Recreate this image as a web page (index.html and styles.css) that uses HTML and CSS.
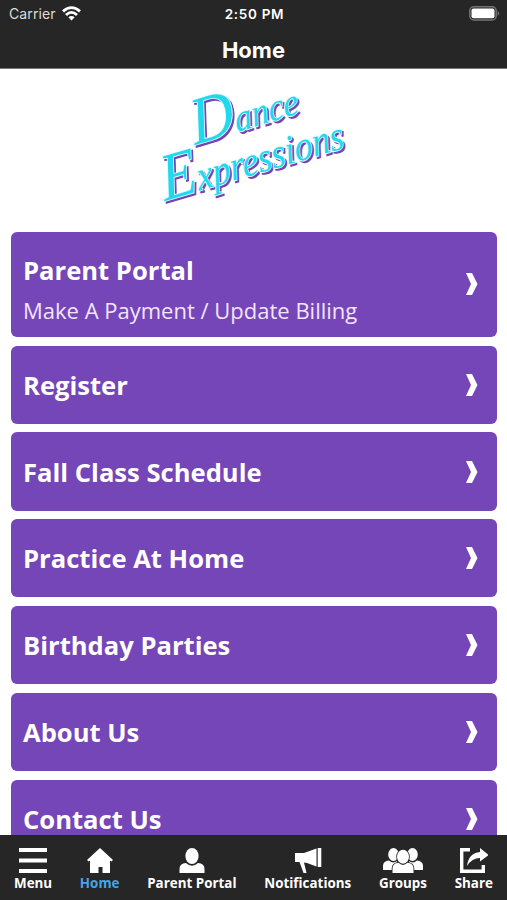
FILE: index.html
```html
<!DOCTYPE html>
<html lang="en">
<head>
<meta charset="utf-8">
<title>Home</title>
<link rel="stylesheet" href="styles.css">
</head>
<body>
<div class="app">
  <header class="header">
    <div class="status">
      <div class="carrier"><span>Carrier</span>
        <svg width="19" height="15" viewBox="0 0 19 15" fill="none" stroke="#fff" stroke-width="2.8"><path d="M1 5.4Q9.5-2.2 18 5.4M4 9Q9.5 3.8 15 9"/><path d="M6.3 11.3Q9.5 8.5 12.7 11.3L9.5 14.4Z" fill="#fff" stroke="none"/></svg>
      </div>
      <div class="clock">2:50 PM</div>
      <svg class="battery" width="31" height="15" viewBox="0 0 31 15"><rect x=".8" y=".8" width="26.4" height="13.2" rx="4" fill="#262626" stroke="#747474" stroke-width="1.5"/><rect x="2.5" y="2.5" width="23" height="9.8" rx="2" fill="#fff"/><path d="M28.6 5Q32 7.4 28.6 9.8Z" fill="#747474"/></svg>
    </div>
    <h1 class="title">Home</h1>
  </header>
  <main class="content">
    <div class="brand">
      <svg width="210" height="135" viewBox="0 0 210 135">
        <defs>
          <g id="wordmark">
            <text transform="translate(45 65) rotate(-17) skewX(-6)" textLength="110" lengthAdjust="spacingAndGlyphs"><tspan font-size="66">D</tspan><tspan font-size="38">ance</tspan></text>
            <text transform="translate(15 121) rotate(-16.5) skewX(-6)" textLength="188" lengthAdjust="spacingAndGlyphs"><tspan font-size="66">E</tspan><tspan font-size="41">xpressions</tspan></text>
          </g>
        </defs>
        <use href="#wordmark" class="logo-shadow" x="2" y="2"/>
        <use href="#wordmark" class="logo-edge"/>
        <use href="#wordmark" class="logo-face"/>
      </svg>
    </div>
    <nav class="list">
      <a class="card tall"><span class="copy"><b>Parent Portal</b><small>Make A Payment / Update Billing</small></span><svg class="chev" viewBox="0 0 12 22"><path d="M0 0H6L11.5 11L6 22H0L5 11Z"/></svg></a>
      <a class="card"><b>Register</b><svg class="chev" viewBox="0 0 12 22"><path d="M0 0H6L11.5 11L6 22H0L5 11Z"/></svg></a>
      <a class="card"><b>Fall Class Schedule</b><svg class="chev" viewBox="0 0 12 22"><path d="M0 0H6L11.5 11L6 22H0L5 11Z"/></svg></a>
      <a class="card"><b>Practice At Home</b><svg class="chev" viewBox="0 0 12 22"><path d="M0 0H6L11.5 11L6 22H0L5 11Z"/></svg></a>
      <a class="card"><b>Birthday Parties</b><svg class="chev" viewBox="0 0 12 22"><path d="M0 0H6L11.5 11L6 22H0L5 11Z"/></svg></a>
      <a class="card"><b>About Us</b><svg class="chev" viewBox="0 0 12 22"><path d="M0 0H6L11.5 11L6 22H0L5 11Z"/></svg></a>
      <a class="card"><b>Contact Us</b><svg class="chev" viewBox="0 0 12 22"><path d="M0 0H6L11.5 11L6 22H0L5 11Z"/></svg></a>
    </nav>
  </main>
  <footer class="tabs">
    <a class="tab"><svg width="28" height="26" viewBox="0 0 28 26"><path d="M0 0H28V4H0ZM0 10.5H28V14.5H0ZM0 21H28V25H0Z"/></svg><span>Menu</span></a>
    <a class="tab active"><svg width="26" height="26" viewBox="0 0 26 26"><path d="M13 0L26 12L24.5 13.5L23 12.5V25H15.5V19H11.5V25H3V12.5L1.5 13.5L0 12Z"/></svg><span>Home</span></a>
    <a class="tab"><svg width="26" height="26" viewBox="0 0 26 26"><ellipse cx="13" cy="8" rx="6.6" ry="8"/><path d="M.5 25V21Q.5 15.4 7 15Q13 20.5 19 15Q25.5 15.4 25.5 21V25Z"/></svg><span>Parent Portal</span></a>
    <a class="tab"><svg width="28" height="26" viewBox="0 0 28 26"><path d="M1 5H10L22.5 .5V18.5L13 15L10 14.5L12.5 25H9.5L5.5 14H1ZM23.7 0H27.3V19H23.7Z"/></svg><span>Notifications</span></a>
    <a class="tab"><svg width="40" height="26" viewBox="0 0 40 26"><g id="side"><ellipse cx="10.5" cy="6.5" rx="5.3" ry="6.5"/><path d="M0 22V18Q0 13 6 12.5Q10 16 14 13L12 22Z"/></g><use href="#side" transform="matrix(-1 0 0 1 40 0)"/><g class="front"><ellipse cx="20" cy="8.8" rx="6" ry="7"/><path d="M9.5 25V20.5Q9.5 15.5 15.5 14.8Q20 19 24.5 14.8Q30.5 15.5 30.5 20.5V25Z"/></g></svg><span>Groups</span></a>
    <a class="tab"><svg width="28" height="26" viewBox="0 0 28 26"><path d="M10 1.7H1.7V23.3H23.3V17" fill="none" stroke="#fff" stroke-width="3.4"/><path d="M20 0L28.5 7L20 13.5V10Q12 10 7 18Q8.5 5 20 4Z"/></svg><span>Share</span></a>
  </footer>
</div>
</body>
</html>
```

FILE: styles.css
```css
* { box-sizing: border-box; }
body { margin: 0; background: #fff; color: #fff; font-family: "Open Sans", sans-serif; }
.app { height: 900px; overflow: hidden; display: flex; flex-direction: column; }
.header { height: 69px; flex: none; background: #262626; border-bottom: 1px solid #777; }
.status { height: 28px; padding: 0 7px 0 9px; display: grid; grid-template-columns: 1fr auto 1fr; align-items: center; font-family: Inter, sans-serif; }
.carrier { display: flex; align-items: center; gap: 6px; font-size: 14px; color: #ddd; letter-spacing: .1px; }
.carrier span { margin-top: -1px; }
.carrier svg { margin-top: -2px; }
.clock { font-size: 13.5px; font-weight: 600; letter-spacing: .7px; }
.battery { justify-self: end; margin-top: -1px; }
.title { margin: 0; text-align: center; font-size: 22px; line-height: 44px; font-weight: 700; font-family: Inter, sans-serif; }
.content { flex: 1; min-height: 0; overflow: hidden; }
.brand { height: 162.5px; padding: 11px 0 0 150px; }
.brand svg { display: block; overflow: visible; font-family: "Liberation Serif", serif; font-style: italic; }
.logo-shadow { fill: #7544b5; stroke: #7544b5; stroke-width: 1.4; }
.logo-edge { fill: #e5fcff; stroke: #e5fcff; stroke-width: 1.8; }
.logo-face { fill: #20d9ee; }
.list { padding: 0 10.5px 0 11px; display: flex; flex-direction: column; gap: 8.7px; }
.card { height: 78.1px; flex: none; background: #7546b7; border-radius: 6px; padding: 0 19px 0 12px; display: flex; align-items: center; justify-content: space-between; }
.card b { font-size: 25.6px; line-height: 34px; font-weight: 700; padding-top: 2px; }
.tall { height: 105.5px; }
.copy { display: flex; flex-direction: column; gap: 6px; padding-top: 9px; }
.copy small { font-size: 22px; line-height: 32px; color: #f3e4ff; }
.chev { width: 12px; height: 22px; fill: #fff; }
.tabs { height: 65px; flex: none; background: #262626; padding: 13px 14px 0; display: flex; justify-content: space-between; }
.tab { display: flex; flex-direction: column; align-items: center; font-size: 13.4px; font-weight: 700; line-height: 18px; white-space: nowrap; }
.tab svg { fill: #fff; display: block; }
.active { color: #45a5e6; }
.front { stroke: #262626; stroke-width: 1.6; paint-order: stroke; }
```
